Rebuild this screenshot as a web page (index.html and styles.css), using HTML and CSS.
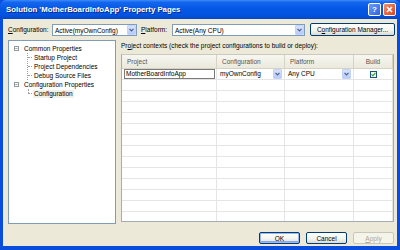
FILE: index.html
```html
<!DOCTYPE html>
<html lang="en">
<head>
  <meta charset="UTF-8">
  <title>Solution 'MotherBoardInfoApp' Property Pages</title>
  <link rel="stylesheet" href="styles.css">
</head>
<body>
  <div class="window">
    <div class="titlebar">
      <span class="title">Solution 'MotherBoardInfoApp' Property Pages</span>
      <span class="caption-btn help">?</span>
      <span class="caption-btn close">
        <svg width="7" height="7" viewBox="0 0 7 7"><path d="M1 1 L6 6 M6 1 L1 6" stroke="#fff" stroke-width="1.6"/></svg>
      </span>
    </div>

    <div class="client">
      <div class="toolbar">
        <span class="lbl"><u>C</u>onfiguration:</span>
        <div class="combo combo-config">
          <span class="combo-text">Active(myOwnConfig)</span>
          <span class="drop"><svg width="5" height="4" viewBox="0 0 5 4"><path d="M0.5 0.8 L2.5 2.8 L4.5 0.8" fill="none" stroke="#4d6185" stroke-width="1.2"/></svg></span>
        </div>
        <span class="lbl lbl-platform"><u>P</u>latform:</span>
        <div class="combo combo-platform">
          <span class="combo-text">Active(Any CPU)</span>
          <span class="drop"><svg width="5" height="4" viewBox="0 0 5 4"><path d="M0.5 0.8 L2.5 2.8 L4.5 0.8" fill="none" stroke="#4d6185" stroke-width="1.2"/></svg></span>
        </div>
        <button class="btn btn-manager">C<u>o</u>nfiguration Manager...</button>
      </div>

      <div class="main">
        <div class="tree">
          <div class="node">
            <span class="expander">&minus;</span>
            <span class="node-text">Common Properties</span>
          </div>
          <div class="children">
            <div class="leaf"><span class="node-text">Startup Project</span></div>
            <div class="leaf"><span class="node-text">Project Dependencies</span></div>
            <div class="leaf"><span class="node-text">Debug Source Files</span></div>
          </div>
          <div class="node">
            <span class="expander">&minus;</span>
            <span class="node-text">Configuration Properties</span>
          </div>
          <div class="children children-last">
            <div class="leaf"><span class="node-text selected">Configuration</span></div>
          </div>
        </div>

        <div class="page">
          <div class="page-caption">Pr<u>o</u>ject contexts (check the project configurations to build or deploy):</div>
          <div class="grid">
            <table>
              <thead>
                <tr>
                  <th class="col-project">Project</th>
                  <th class="col-config">Configuration</th>
                  <th class="col-platform">Platform</th>
                  <th class="col-build">Build</th>
                </tr>
              </thead>
              <tbody>
                <tr>
                  <td><div class="edit">MotherBoardInfoApp</div></td>
                  <td><div class="cell-combo">myOwnConfig<span class="drop"><svg width="5" height="4" viewBox="0 0 5 4"><path d="M0.5 0.8 L2.5 2.8 L4.5 0.8" fill="none" stroke="#4d6185" stroke-width="1.2"/></svg></span></div></td>
                  <td><div class="cell-combo">Any CPU<span class="drop"><svg width="5" height="4" viewBox="0 0 5 4"><path d="M0.5 0.8 L2.5 2.8 L4.5 0.8" fill="none" stroke="#4d6185" stroke-width="1.2"/></svg></span></div></td>
                  <td class="cell-build"><span class="check"><svg width="5" height="5" viewBox="0 0 5 5"><path d="M0.6 2.4 L1.9 3.8 L4.4 0.9" fill="none" stroke="#21a121" stroke-width="1.1"/></svg></span></td>
                </tr>
                <tr><td></td><td></td><td></td><td></td></tr>
                <tr><td></td><td></td><td></td><td></td></tr>
                <tr><td></td><td></td><td></td><td></td></tr>
                <tr><td></td><td></td><td></td><td></td></tr>
                <tr><td></td><td></td><td></td><td></td></tr>
                <tr><td></td><td></td><td></td><td></td></tr>
                <tr><td></td><td></td><td></td><td></td></tr>
                <tr><td></td><td></td><td></td><td></td></tr>
                <tr><td></td><td></td><td></td><td></td></tr>
                <tr><td></td><td></td><td></td><td></td></tr>
                <tr><td></td><td></td><td></td><td></td></tr>
                <tr><td></td><td></td><td></td><td></td></tr>
                <tr><td></td><td></td><td></td><td></td></tr>
              </tbody>
            </table>
          </div>
        </div>
      </div>

      <div class="buttons">
        <button class="btn btn-default">OK</button>
        <button class="btn">Cancel</button>
        <button class="btn btn-disabled" disabled><u>A</u>pply</button>
      </div>
    </div>
  </div>
</body>
</html>
```

FILE: styles.css
```css
body {
  margin: 0;
  font-family: "Liberation Sans", Arial, sans-serif;
  font-size: 6.5px;
  color: #000;
}

.window {
  width: 400px;
  height: 250px;
  box-sizing: border-box;
  padding: 0 3px 4px 3px;
  background: #0a4ddc;
  display: flex;
  flex-direction: column;
}

.titlebar {
  height: 19px;
  margin: 0 -3px;
  padding: 0 4px 0 6px;
  display: flex;
  align-items: center;
  gap: 2px;
  background: linear-gradient(#3c8cf8 0%, #1466ee 12%, #0458e4 45%, #0353df 80%, #0447c6 100%);
  border-radius: 6px 6px 0 0;
}

.title {
  flex: 1;
  color: #fff;
  font-weight: bold;
  font-size: 7.8px;
  text-shadow: 1px 1px 0 #0a2a8a;
}

.caption-btn {
  width: 13px;
  height: 13px;
  box-sizing: border-box;
  border: 1px solid #fff;
  border-radius: 2px;
  display: flex;
  align-items: center;
  justify-content: center;
}

.help {
  background: linear-gradient(135deg, #6e9cf7, #2c63e3);
  color: #fff;
  font-weight: bold;
  font-size: 8px;
}

.close {
  background: linear-gradient(135deg, #f0926e, #d8441c);
}

.client {
  flex: 1;
  background: #ece9d8;
  display: flex;
  flex-direction: column;
}

/* top row */
.toolbar {
  height: 21px;
  box-sizing: border-box;
  padding: 5px 2px 0 5px;
  display: flex;
  align-items: flex-start;
}

.lbl {
  width: 44px;
  line-height: 12px;
}

.lbl-platform {
  width: 31px;
  margin-left: 4px;
}

.combo {
  height: 12px;
  box-sizing: border-box;
  background: #fff;
  border: 1px solid #7f9db9;
  display: flex;
  align-items: center;
  padding-left: 2px;
}

.combo-config {
  width: 85px;
}

.combo-platform {
  width: 133px;
}

.combo-text {
  flex: 1;
}

.drop {
  width: 9px;
  height: 10px;
  box-sizing: border-box;
  background: linear-gradient(#d6e2fd, #b8cbf8);
  border: 1px solid #c1d3fb;
  border-radius: 1px;
  display: flex;
  align-items: center;
  justify-content: center;
}

.btn {
  font-family: inherit;
  font-size: 6.5px;
  height: 13px;
  padding: 0;
  box-sizing: border-box;
  background: linear-gradient(#ffffff, #f3f3ee 60%, #dcdad0);
  border: 1px solid #003c74;
  border-radius: 2px;
  color: #000;
}

.btn-manager {
  width: 85px;
  margin-left: 5px;
  margin-top: -1px;
}

/* middle */
.main {
  height: 184px;
  display: flex;
  padding: 0 5px 0 5px;
  gap: 5px;
}

.tree {
  width: 108px;
  box-sizing: border-box;
  background: #fff;
  border: 1px solid #7f9db9;
  padding: 3px 0 0 5px;
}

.node {
  height: 9px;
  display: flex;
  align-items: center;
  gap: 4px;
}

.expander {
  width: 5px;
  height: 5px;
  box-sizing: border-box;
  border: 1px solid #919b9c;
  font-size: 5px;
  line-height: 3px;
  text-align: center;
  color: #000;
}

.children {
  margin-left: 13px;
  border-left: 1px dotted #a0a0a0;
}

.children-last {
  border-left: none;
  padding-left: 1px;
}

.leaf {
  height: 9px;
  display: flex;
  align-items: center;
  padding-left: 5px;
  position: relative;
}

.leaf::before {
  content: "";
  position: absolute;
  left: 0;
  top: 4px;
  width: 4px;
  border-top: 1px dotted #a0a0a0;
}

.children-last .leaf::after {
  content: "";
  position: absolute;
  left: 0;
  top: 0;
  height: 4px;
  border-left: 1px dotted #a0a0a0;
}

.node-text {
  padding: 0 1px;
  line-height: 8px;
}

.selected {
  background: #f0efe8;
}

.page {
  flex: 1;
  display: flex;
  flex-direction: column;
  margin-right: -2px;
}

.page-caption {
  height: 14px;
  line-height: 12px;
}

.grid {
  flex: 1;
  background: #fff;
  border: 1px solid #a5acb5;
  border-top-color: #c9c9c0;
  margin-bottom: 2px;
  overflow: hidden;
}

table {
  width: 100%;
  border-collapse: collapse;
  table-layout: fixed;
}

th {
  height: 13px;
  padding: 0 0 0 5px;
  text-align: left;
  font-weight: normal;
  color: #555;
  background: linear-gradient(#f7f6f0, #ebe9dd);
  border-right: 1px solid #d6d3c4;
  border-bottom: 1px solid #d6d3c4;
}

.col-project {
  width: 89px;
}

.col-config {
  width: 62px;
}

.col-platform {
  width: 63px;
}

.col-build {
  text-align: center;
  padding-left: 0;
}

td {
  height: 10px;
  padding: 0;
  border-right: 1px solid #e5e5e5;
  border-bottom: 1px solid #e5e5e5;
}

.edit {
  height: 10px;
  box-sizing: border-box;
  margin: 0 1px 0 2px;
  border: 1px solid #7a7a7a;
  padding-left: 1px;
  line-height: 8px;
}

.cell-combo {
  display: flex;
  align-items: center;
  justify-content: space-between;
  padding: 0 2px 0 3px;
  line-height: 10px;
}

.cell-build {
  text-align: center;
}

.check {
  display: inline-flex;
  width: 7px;
  height: 7px;
  box-sizing: border-box;
  border: 1px solid #1c5180;
  background: #f4f4ee;
  align-items: center;
  justify-content: center;
  vertical-align: middle;
}

/* bottom row */
.buttons {
  flex: 1;
  display: flex;
  justify-content: flex-end;
  align-items: flex-start;
  gap: 6px;
  padding: 8px 3px 0 0;
}

.buttons .btn {
  width: 41px;
  height: 12px;
}

.btn-default {
  box-shadow: inset 0 0 0 1px #97b8f0, inset 0 -1px 0 1px #8aa7e6;
}

.btn-disabled {
  background: #f5f4ea;
  border-color: #c9c7ba;
  color: #aca899;
}
```
